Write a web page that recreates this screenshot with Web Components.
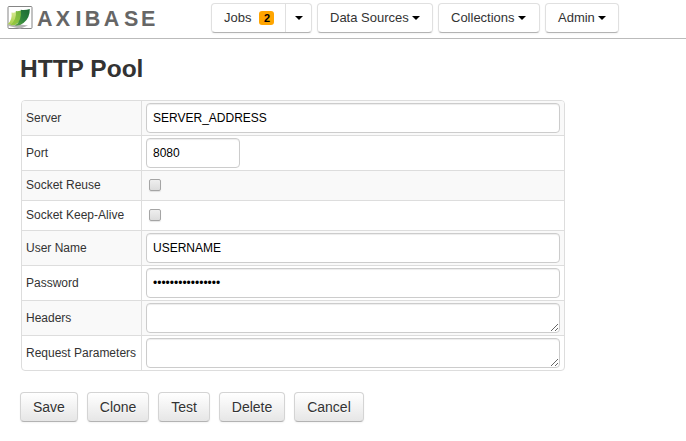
<!DOCTYPE html>
<html lang="en"><head><meta charset="utf-8"><title>HTTP Pool</title>
<style>body{margin:0;background:#fff;color:#333;font:12px/20px "Liberation Sans",Arial,sans-serif;height:441px;overflow:hidden}</style></head>
<body><pool-page></pool-page>
<script>
function define(name, html, setup) {
  customElements.define(name, class extends HTMLElement {
    connectedCallback() {
      if (this.shadowRoot) return;
      const t = document.createElement('template');
      t.innerHTML = html;
      const root = this.attachShadow({mode: 'open'});
      root.append(t.content.cloneNode(true));
      if (setup) setup(this, root);
    }
  });
}

define('brand-logo', `<style>
:host{display:block;width:152px;height:28px}svg{display:block;overflow:visible}</style>
<svg width="152" height="28" viewBox="0 0 152 28">
<defs><linearGradient id="a" x1="0" y1="0" x2="0" y2="1"><stop offset="0" stop-color="#d9e996"/><stop offset="1" stop-color="#a9cf48"/></linearGradient>
<linearGradient id="b" x1="1" y1="0" x2="0" y2="1"><stop offset="0" stop-color="#6fb23f"/><stop offset="1" stop-color="#9ccb3f"/></linearGradient>
<linearGradient id="c" x1="1" y1="0" x2="0" y2="1"><stop offset="0" stop-color="#1b6a34"/><stop offset=".5" stop-color="#2a803c"/><stop offset="1" stop-color="#5aa83c"/></linearGradient></defs>
<rect x="2" y=".5" width="24" height="22" rx="1" fill="#fff" stroke="#858585" stroke-width="1"/>
<path d="M1 19.500 4 17 18 19 22 19.500 14 22.800Z" fill="#b5b5b5"/>
<path d="M5.500 6.500 Q9 7 11.500 5.500 Q12 13 8 16 Q5 18.500 1.500 18.500 Q6.500 14 5.500 6.500Z" fill="url(#a)"/>
<path d="M9.800 5 Q13 5.500 17 4 Q17 12.500 12.500 16.500 Q9 20 4 19 Q11 14 9.800 5Z" fill="url(#b)"/>
<path d="M14.800 3.700 Q19 4.500 23.800 3 Q24 12 17.500 17 Q14 20 9 19.800 Q16 15 14.800 3.700Z" fill="url(#c)"/>
<text x="31 49.800 69.500 78.800 97.800 118 135" y="19.500" font-family="Liberation Sans, Arial, sans-serif" font-size="21.500" font-weight="700" fill="#666">AXIBASE</text>
</svg>`);

define('nav-button', `<style>
:host{display:flex;box-sizing:border-box;height:30px;border:1px solid #e0e0e0;border-bottom-color:#b3b3b3;border-radius:4px;background:#fff;font-size:13px;line-height:20px;box-shadow:0 1px 2px rgba(0,0,0,.05)}
.main{display:flex;align-items:center;flex:1;padding-left:12px;white-space:nowrap}
.caret{width:0;height:0;border:4px solid transparent;border-top-color:#000;border-bottom:0;margin:0 0 1px 3px}
.split{display:flex;align-items:center;justify-content:center;width:25px;border-left:1px solid #e0e0e0}.split .caret{margin:0 0 1px}
b{background:#ffa500;color:#000;font-size:11px;line-height:14px;width:15px;text-align:center;border-radius:3px;margin:0 0 1px 8px}
</style><div class="main"><slot></slot></div>`, (h, r) => {
  h.style.width = h.getAttribute('width') + 'px';
  const main = r.querySelector('.main');
  if (h.hasAttribute('count')) {
    const b = document.createElement('b'); b.textContent = h.getAttribute('count'); main.append(b);
    const s = document.createElement('div'); s.className = 'split'; s.innerHTML = '<i class="caret"></i>'; r.append(s);
  } else {
    const c = document.createElement('i'); c.className = 'caret'; main.append(c);
  }
});

define('top-bar', `<style>
:host{display:flex;box-sizing:border-box;height:39px;border-bottom:1px solid #bbb;padding:3px 0 0 6px}
brand-logo{margin:3px 53px 0 0}nav{display:flex;gap:5px}</style>
<brand-logo></brand-logo><nav>
<nav-button width="101" count="2">Jobs</nav-button><nav-button width="116">Data Sources</nav-button><nav-button width="102">Collections</nav-button><nav-button width="74">Admin</nav-button></nav>`);

define('form-row', `<style>
:host{display:grid;grid-template-columns:120px 1fr;box-sizing:border-box;height:35px;border-bottom:1px solid #ddd}
:host([kind=checkbox]){height:30px}
:host(:nth-child(odd)){background:#f9f9f9}
:host(:last-child){border-bottom:0;height:34px}
label{padding:7px 0 0 4px;border-right:1px solid #ddd;white-space:nowrap}
:host([kind=checkbox]) label{padding-top:4px}
.cell{padding:2px 4px}
.box{display:block;box-sizing:border-box;margin:0;width:100%;height:30px;min-height:0;border:1px solid #ccc;border-radius:4px;background:#fff;color:#000;padding:4px 6px;font:12px/20px "Liberation Sans",Arial,sans-serif;box-shadow:inset 0 1px 1px rgba(0,0,0,.075);outline:0}
textarea.box{resize:vertical;overflow:hidden}
:host([short]) .box{width:94px}
.check{appearance:none;display:block;box-sizing:border-box;width:12px;height:12px;margin:6px 0 0 3px;border:1px solid #a5a5a5;border-radius:2px;background:linear-gradient(#eee,#dcdcdc);box-shadow:0 1px 1px rgba(0,0,0,.1)}
</style><label for="f"><slot></slot></label><div class="cell"></div>`, (h, r) => {
  const kind = h.getAttribute('kind') || 'text';
  const f = document.createElement(kind === 'textarea' ? 'textarea' : 'input');
  f.id = 'f';
  f.className = kind === 'checkbox' ? 'check' : 'box';
  f.spellcheck = false;
  if (kind !== 'textarea') f.type = kind;
  if (h.hasAttribute('value')) f.value = h.getAttribute('value');
  r.querySelector('.cell').append(f);
});

define('settings-table', `<style>:host{display:block;box-sizing:border-box;width:544px;border:1px solid #ddd;border-radius:4px;overflow:hidden}</style><slot></slot>`);

define('action-button', `<style>
:host{display:block;box-sizing:border-box;height:30px;padding:4px 12px;border:1px solid #d4d4d4;border-bottom-color:#b3b3b3;border-radius:4px;background:linear-gradient(#fff,#e6e6e6);font-size:14px;line-height:20px;box-shadow:inset 0 1px 0 rgba(255,255,255,.2),0 1px 2px rgba(0,0,0,.05);text-shadow:0 1px 1px rgba(255,255,255,.75)}
</style><slot></slot>`);

define('pool-page', `<style>
:host{display:block}main{padding:10px 20px}
h1{margin:0;font-size:24.5px;line-height:40px}
settings-table{margin:11px 0 0 1px}
footer{display:flex;gap:8.88px;margin-top:21px}</style>
<top-bar></top-bar><main><h1>HTTP Pool</h1>
<settings-table><form-row value="SERVER_ADDRESS">Server</form-row><form-row short value="8080">Port</form-row><form-row kind="checkbox">Socket Reuse</form-row><form-row kind="checkbox">Socket Keep-Alive</form-row><form-row value="USERNAME">User Name</form-row><form-row kind="password" value="passwordpassword">Password</form-row><form-row kind="textarea">Headers</form-row><form-row kind="textarea">Request Parameters</form-row></settings-table>
<footer><action-button>Save</action-button><action-button>Clone</action-button><action-button>Test</action-button><action-button>Delete</action-button><action-button>Cancel</action-button></footer></main>`);
</script></body></html>
